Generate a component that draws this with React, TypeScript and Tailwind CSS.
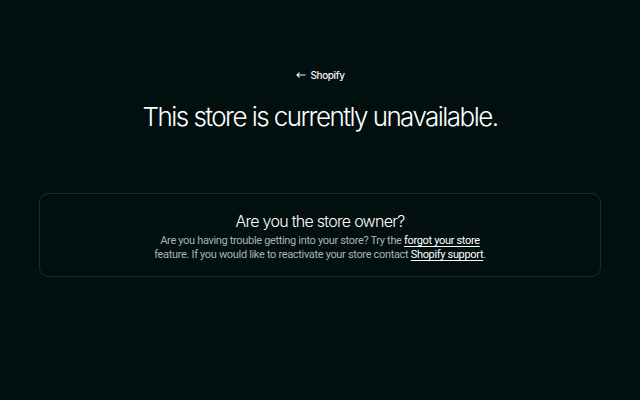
export default function App() {
  return (
    <div
      className="w-[640px] h-[400px] bg-[#020f0f] text-white flex flex-col items-center"
      style={{ fontFamily: "Inter, 'Liberation Sans', sans-serif" }}
    >
      <a className="mt-[68px] flex items-center gap-[5px] text-[10px] leading-[14px] font-medium tracking-[-0.04em] text-[#f2f4f4]">
        <svg width="10" height="6" viewBox="0 0 10 6" fill="none" stroke="currentColor" strokeWidth="1.2">
          <path d="M9.5 3H1M3.5 0.6L1 3l2.5 2.4" />
        </svg>
        Shopify
      </a>
      <h1 className="mt-[18px] text-[26px] leading-[34px] font-light tracking-[-0.06em] text-white">
        This store is currently unavailable.
      </h1>
      <div className="mt-[59px] w-[562px] h-[84px] rounded-[9px] border border-[#1d2b2b] flex flex-col items-center justify-center">
        <h2 className="mt-[2px] text-[16px] leading-[22px] font-light tracking-[-0.045em] text-white">Are you the store owner?</h2>
        <p
          className="mt-[2px] text-[11px] leading-[14px] text-[#a9b3b3] text-center tracking-[-0.03em]"
          style={{ fontFamily: "Roboto, 'Liberation Sans', sans-serif" }}
        >
          Are you having trouble getting into your store? Try the{" "}
          <a className="text-white underline underline-offset-2">forgot your store</a>
          <br />
          feature. If you would like to reactivate your store contact{" "}
          <a className="text-white underline underline-offset-2">Shopify support</a>.
        </p>
      </div>
    </div>
  );
}
